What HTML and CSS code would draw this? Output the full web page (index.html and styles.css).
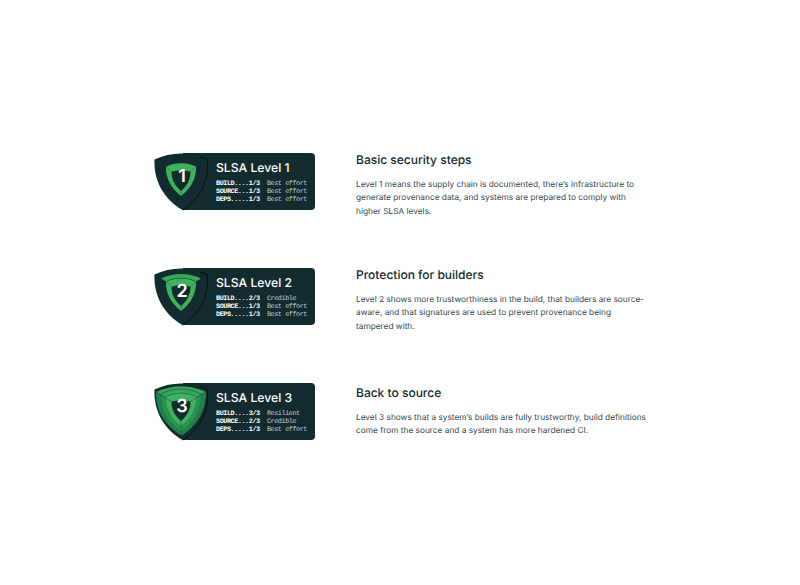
FILE: index.html
```html
<!DOCTYPE html>
<html lang="en">
<head>
    <meta charset="UTF-8">
    <title>SLSA Levels</title>
    <link rel="stylesheet" href="styles.css">
</head>
<body>
    <svg class="defs" width="0" height="0">
        <defs>
            <path id="shield" d="M0.5 6.5C17 -1.5 37 -1.5 53.5 6.5C55 29 45 47 28.5 57C11 47 -0.5 29 0.5 6.5Z"/>
            <path id="edge" d="M46 3.7C48.6 4.4 51 5.3 53.5 6.5C55 29 45 47 28.5 57"/>
            <path id="band-3" d="M2 9C17 1.5 37 1.5 52 9C52.5 27 43 43 27.5 52.5C11 43 1.5 27 2 9Z"/>
            <path id="band-2" d="M7 11C19 4.5 35 4.5 47 11C47.5 26 40 39 27 48C14 39 6.5 26 7 11Z"/>
            <path id="band-1" d="M12 13.5C21 9 33 9 42 13.5C42.5 25 37 35.5 27 43C17 35.5 11.5 25 12 13.5Z"/>
            <path id="core" d="M17.5 18.5C23 17 31 17 36.5 18.5C36.5 27 33 33 27 38C21 33 17.5 27 17.5 18.5Z"/>
        </defs>
    </svg>

    <div class="levels">
        <div class="level">
            <div class="badge">
                <div class="badge-panel">
                    <div class="badge-title">SLSA Level 1</div>
                    <pre class="badge-tracks"><b>BUILD....1/3</b>  Best effort
<b>SOURCE...1/3</b>  Best effort
<b>DEPS.....1/3</b>  Best effort</pre>
                </div>
                <svg class="shield" width="56" height="58" viewBox="0 0 56 58">
                    <use href="#shield" class="shield-bg"/>
                    <use href="#edge" class="edge"/>
                    <use href="#band-1" class="band-light"/>
                    <use href="#core" class="shield-bg"/>
                    <path class="seam" d="M12 13.5L17.5 18.5M42 13.5L36.5 18.5M27 43V38"/>
                </svg>
                <span class="badge-num">1</span>
            </div>
            <div class="level-text">
                <h2>Basic security steps</h2>
                <p>Level 1 means the supply chain is documented, there’s infrastructure to generate provenance data, and systems are prepared to comply with higher SLSA levels.</p>
            </div>
        </div>

        <div class="level">
            <div class="badge">
                <div class="badge-panel">
                    <div class="badge-title">SLSA Level 2</div>
                    <pre class="badge-tracks"><b>BUILD....2/3</b>  Credible
<b>SOURCE...1/3</b>  Best effort
<b>DEPS.....1/3</b>  Best effort</pre>
                </div>
                <svg class="shield" width="56" height="58" viewBox="0 0 56 58">
                    <use href="#shield" class="shield-bg"/>
                    <use href="#edge" class="edge"/>
                    <path class="band-mid" d="M7 10.5C19 4.5 35 4.5 47 10.5L42 13.5C33 9 21 9 12 13.5Z"/>
                    <use href="#band-1" class="band-light"/>
                    <use href="#core" class="shield-bg"/>
                    <path class="seam" d="M12 13.5L17.5 18.5M42 13.5L36.5 18.5M27 43V38"/>
                    <path class="gap" d="M12 13.5C21 9 33 9 42 13.5"/>
                </svg>
                <span class="badge-num">2</span>
            </div>
            <div class="level-text">
                <h2>Protection for builders</h2>
                <p>Level 2 shows more trustworthiness in the build, that builders are source-aware, and that signatures are used to prevent provenance being tampered with.</p>
            </div>
        </div>

        <div class="level">
            <div class="badge">
                <div class="badge-panel">
                    <div class="badge-title">SLSA Level 3</div>
                    <pre class="badge-tracks"><b>BUILD....3/3</b>  Resilient
<b>SOURCE...2/3</b>  Credible
<b>DEPS.....1/3</b>  Best effort</pre>
                </div>
                <svg class="shield" width="56" height="58" viewBox="0 0 56 58">
                    <use href="#shield" class="shield-bg"/>
                    <use href="#edge" class="edge"/>
                    <use href="#band-3" class="band-dark"/>
                    <path class="band-mid" d="M2 9C17 1.5 37 1.5 52 9L47 11C35 4.5 19 4.5 7 11Z"/>
                    <use href="#band-2" class="band-side"/>
                    <path class="band-mid" d="M7 11C19 4.5 35 4.5 47 11L42 13.5C33 9 21 9 12 13.5Z"/>
                    <use href="#band-1" class="band-light"/>
                    <use href="#core" class="shield-bg"/>
                    <path class="gap" d="M2 9L17.5 18.5M52 9L36.5 18.5M27.5 52.5L27 38"/>
                    <path class="gap" d="M7 11C19 4.5 35 4.5 47 11M12 13.5C21 9 33 9 42 13.5"/>
                </svg>
                <span class="badge-num">3</span>
            </div>
            <div class="level-text level-text-short">
                <h2>Back to source</h2>
                <p>Level 3 shows that a system’s builds are fully trustworthy, build definitions come from the source and a system has more hardened CI.</p>
            </div>
        </div>
    </div>
</body>
</html>
```

FILE: styles.css
```css
body {
    margin: 0;
    font-family: Inter, "Liberation Sans", sans-serif;
    text-rendering: geometricPrecision;
    background: white;
}

.defs {
    display: block;
}

.levels {
    padding: 153px 0 0 154px;
}

.level {
    display: flex;
    gap: 41px;
    height: 115px;
}

.badge {
    position: relative;
    width: 161px;
    height: 57px;
    flex: none;
}

.shield {
    position: absolute;
    left: 0;
    top: 0;
}

.shield-bg {
    fill: #122b2f;
}

.edge {
    fill: none;
    stroke: #050f12;
    stroke-width: 1;
}

.band-light {
    fill: #3fb25f;
}

.band-mid {
    fill: #38a85a;
}

.band-dark {
    fill: #217f48;
}

.band-side {
    fill: #2a9150;
}

.seam {
    fill: none;
    stroke: #217f48;
    stroke-width: 0.7;
}

.gap {
    fill: none;
    stroke: #122b2f;
    stroke-width: 0.4;
}

.badge-num {
    position: absolute;
    left: 19px;
    top: 14px;
    width: 18px;
    text-align: center;
    color: white;
    font-size: 18px;
    font-weight: 600;
    line-height: 20px;
}

.badge-panel {
    margin-left: 29px;
    height: 57px;
    box-sizing: border-box;
    padding: 7px 0 0 33px;
    background: #122b2f;
    border-radius: 0 4px 4px 0;
}

.badge-title {
    color: white;
    font-size: 12.2px;
    font-weight: 500;
    line-height: 15px;
}

.badge-tracks {
    margin: 5px 0 0;
    color: #c5ced0;
    font-family: "Liberation Mono", monospace;
    font-size: 6.8px;
    letter-spacing: -0.44px;
    line-height: 8px;
}

.badge-tracks b {
    color: white;
}

.level-text {
    width: 292px;
}

.level-text-short {
    padding-top: 3px;
}

h2 {
    margin: -1px 0 0;
    color: #12292e;
    font-size: 12px;
    font-weight: 500;
    line-height: 16px;
}

p {
    margin: 10.5px 0 0;
    color: #33474c;
    font-size: 8.3px;
    line-height: 13.5px;
}
```
